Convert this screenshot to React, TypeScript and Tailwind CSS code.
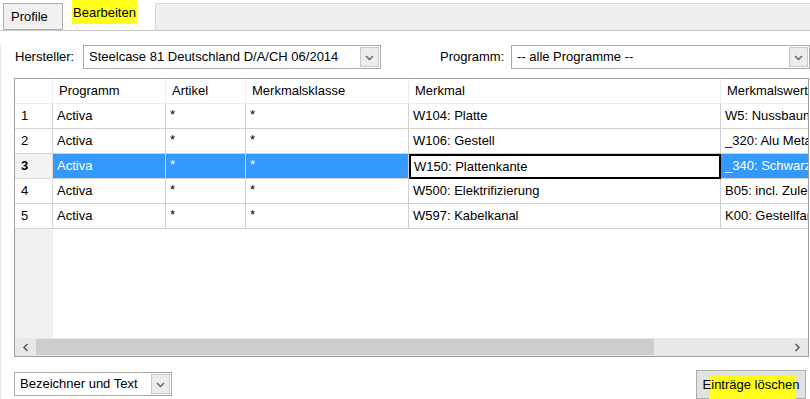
import React from 'react';

const font = { fontFamily: '"Liberation Sans", Arial, sans-serif' };

const columns = [
  { key: 'programm', label: 'Programm', width: 'w-[113px]' },
  { key: 'artikel', label: 'Artikel', width: 'w-[80px]' },
  { key: 'klasse', label: 'Merkmalsklasse', width: 'w-[163px]' },
  { key: 'merkmal', label: 'Merkmal', width: 'w-[312px]' },
  { key: 'wert', label: 'Merkmalswert', width: 'w-[160px]' },
];

const rows = [
  { programm: 'Activa', artikel: '*', klasse: '*', merkmal: 'W104: Platte', wert: 'W5: Nussbaum' },
  { programm: 'Activa', artikel: '*', klasse: '*', merkmal: 'W106: Gestell', wert: '_320: Alu Metallic' },
  { programm: 'Activa', artikel: '*', klasse: '*', merkmal: 'W150: Plattenkante', wert: '_340: Schwarz' },
  { programm: 'Activa', artikel: '*', klasse: '*', merkmal: 'W500: Elektrifizierung', wert: 'B05: incl. Zuleitung' },
  { programm: 'Activa', artikel: '*', klasse: '*', merkmal: 'W597: Kabelkanal', wert: 'K00: Gestellfarbe' },
];

function Chevron() {
  return (
    <svg width="9" height="6" viewBox="0 0 9 6" className="mt-[2px]">
      <path d="M1 1 L4.5 4.5 L8 1" fill="none" stroke="#606060" strokeWidth="1.4" />
    </svg>
  );
}

function Combo({ value, width }: { value: string; width: string }) {
  return (
    <div className={`flex h-[24px] ${width} items-stretch border border-[#a9a9a9] bg-white`}>
      <div className="flex flex-1 items-center overflow-hidden whitespace-nowrap pl-[5px] text-[13px] text-black">{value}</div>
      <div className="m-[1px] flex w-[19px] items-center justify-center border border-[#c9c9c9] bg-[#ececec]">
        <Chevron />
      </div>
    </div>
  );
}

export default function App() {
  return (
    <div className="relative h-[399px] w-[810px] overflow-hidden bg-white text-black" style={font}>
      {/* Tabs */}
      <div className="flex h-[30px] items-end pl-[3px]">
        <div className="flex h-[27px] w-[60px] items-center border border-[#adadad] bg-[#f0f0f0] pl-[7px] text-[13px]">Profile</div>
        <div className="flex h-[30px] w-[92px] items-start pl-[9px]">
          <span className="bg-[#ffff1a] px-[1px] pt-[6px] pb-[4px] text-[13px] leading-[14px]">Bearbeiten</span>
        </div>
        <div className="h-[27px] flex-1 border border-b-0 border-[#d6d6d6] border-r-0 bg-[#efefef]" />
      </div>
      <div className="h-[1px] w-full bg-[#c9c9c9]" />

      <div className="border-l border-[#e3e3e3] pl-[13px]">
        {/* Filters */}
        <div className="mt-[14px] flex h-[24px] items-center">
          <span className="ml-[1px] w-[68px] text-[13px]">Hersteller:</span>
          <Combo value="Steelcase 81 Deutschland D/A/CH 06/2014" width="w-[298px]" />
          <span className="ml-[59px] w-[71px] text-[13px]">Programm:</span>
          <Combo value="-- alle Programme --" width="w-[299px]" />
        </div>

        {/* Grid */}
        <div className="mt-[9px] flex h-[279px] w-[795px] flex-col overflow-hidden border border-[#a0a0a0] bg-white">
          <div className="flex h-[25px] shrink-0 border-b border-[#e6edf5]">
            <div className="w-[38px] shrink-0 border-r border-[#e6edf5]" />
            {columns.map((c) => (
              <div key={c.key} className={`${c.width} flex shrink-0 items-center border-r border-[#e6edf5] pl-[6px] text-[13px] whitespace-nowrap`}>
                {c.label}
              </div>
            ))}
          </div>
          {rows.map((r, i) => {
            const selected = i === 2;
            return (
              <div key={i} className="flex h-[25px] shrink-0">
                <div className={`flex w-[38px] shrink-0 items-center border-r border-b border-[#d8d8d8] pl-[6px] text-[13px] ${selected ? 'bg-[#f3f3f3] font-bold' : 'bg-white'}`}>
                  {i + 1}
                </div>
                {columns.map((c) => {
                  const v = r[c.key as keyof typeof r];
                  const star = v === '*';
                  if (selected && c.key === 'merkmal') {
                    return (
                      <div key={c.key} className={`${c.width} flex shrink-0 items-center border-2 border-black bg-white pl-[3px] text-[13px] whitespace-nowrap`}>
                        {v}
                      </div>
                    );
                  }
                  return (
                    <div
                      key={c.key}
                      className={`${c.width} flex shrink-0 overflow-hidden border-r border-b border-[#d0d0d0] pl-[4px] text-[13px] whitespace-nowrap ${star ? 'items-start pt-[1px]' : 'items-center'} ${selected ? 'bg-[#3399ff] text-white' : 'bg-white'}`}
                    >
                      {v}
                    </div>
                  );
                })}
              </div>
            );
          })}
          <div className="flex flex-1">
            <div className="w-[38px] shrink-0 bg-[#f0f0f0]" />
            <div className="flex-1 bg-white" />
          </div>
          {/* Scrollbar */}
          <div className="flex h-[18px] shrink-0 items-stretch bg-[#e8e8e8]">
            <div className="flex w-[21px] items-center justify-center">
              <svg width="7" height="9" viewBox="0 0 7 9">
                <path d="M5.5 1 L2 4.5 L5.5 8" fill="none" stroke="#606060" strokeWidth="1.6" />
              </svg>
            </div>
            <div className="my-[1px] w-[618px] bg-[#cdcdcd]" />
            <div className="flex-1" />
            <div className="flex w-[21px] items-center justify-center">
              <svg width="7" height="9" viewBox="0 0 7 9">
                <path d="M1.5 1 L5 4.5 L1.5 8" fill="none" stroke="#606060" strokeWidth="1.6" />
              </svg>
            </div>
          </div>
        </div>

        {/* Bottom bar */}
        <div className="mt-[12px] flex items-center justify-between pr-[4px]">
          <Combo value="Bezeichner und Text" width="w-[158px]" />
          <div className="relative mt-[1px] flex h-[29px] w-[110px] items-center justify-center border border-[#adadad] bg-[#e1e1e1] text-[13px]">
            <span className="absolute top-[5px] left-[12px] h-[24px] w-[87px] bg-[#ffff1a]" />
            <span className="relative">Einträge löschen</span>
          </div>
        </div>
      </div>
    </div>
  );
}
